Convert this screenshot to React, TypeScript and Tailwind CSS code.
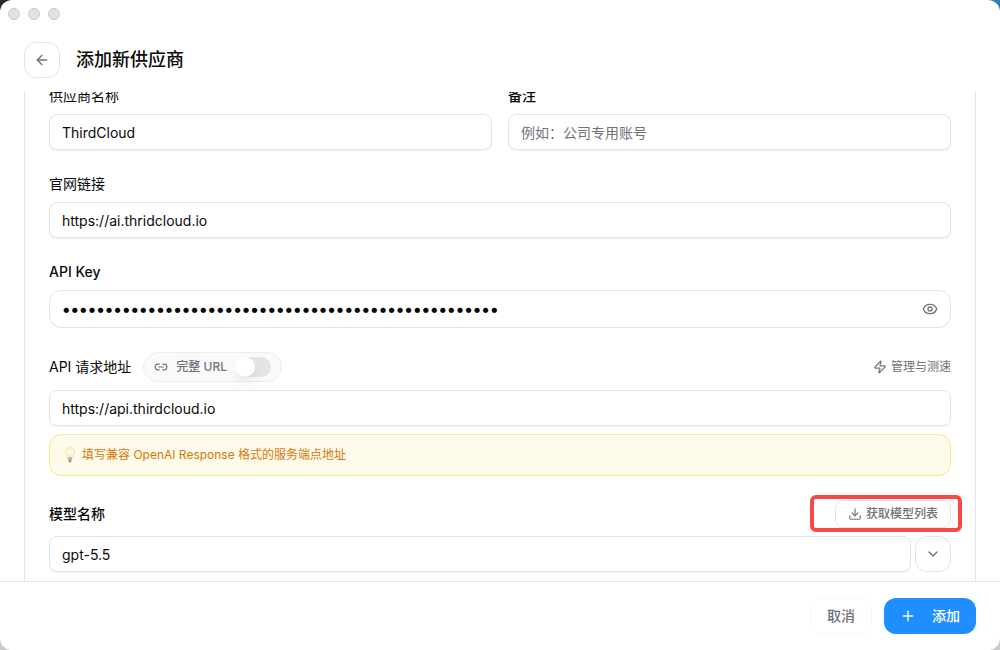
import { useState, type ReactNode } from "react";
import { ArrowLeft, ChevronDown, Download, Eye, Link2, Plus, Zap } from "lucide-react";

const inputClass =
  "block h-9 w-full min-w-0 rounded-lg border border-[#e4e4e7] bg-white px-3 text-sm text-[#09090b] shadow-xs outline-none placeholder:text-[#71717a]";

function Label({ htmlFor, children }: { htmlFor: string; children: ReactNode }) {
  return (
    <label htmlFor={htmlFor} className="block text-sm">
      {children}
    </label>
  );
}

function BulbIcon() {
  return (
    <svg width="16" height="16" viewBox="0 0 16 16" aria-hidden="true" className="shrink-0">
      <path
        d="M8 0.8a4.5 4.5 0 0 0-4.5 4.5c0 2.2 1.8 3.2 2.2 5.2h4.6c.4-2 2.2-3 2.2-5.2A4.5 4.5 0 0 0 8 0.8z"
        fill="#fffadf"
        stroke="#f3dfa0"
        strokeWidth="1"
      />
      <path d="M6.6 6 7.4 10.4M9.4 6 8.6 10.4" fill="none" stroke="#f6dc9a" strokeWidth="0.6" />
      <path d="M6 10.6h4v2.2L9.2 14.4H6.8L6 12.8z" fill="#a3a3a8" />
      <path d="M6 12h4" stroke="#d4d4d8" strokeWidth="0.6" />
      <path d="M6.8 14.2h2.4l-.6 1.2H7.4z" fill="#71717a" />
    </svg>
  );
}

export default function App() {
  const [fullUrl, setFullUrl] = useState(false);
  const [showKey, setShowKey] = useState(false);

  return (
    <div className="h-screen bg-[linear-gradient(to_right,#1c2b30_50%,#2f7db3_50%)] font-['Inter','Noto_Sans_CJK_SC',sans-serif] text-[#09090b]">
      <div className="h-full bg-[linear-gradient(to_bottom,transparent_50%,#c9c9c9_50%)]">
        <div className="flex h-full flex-col overflow-hidden rounded-xl bg-white">
          <div className="flex h-7 shrink-0 items-center gap-2 px-2">
            <span className="size-3 rounded-full border border-[#c9c9c9] bg-[#e2e2e2]" />
            <span className="size-3 rounded-full border border-[#c9c9c9] bg-[#e2e2e2]" />
            <span className="size-3 rounded-full border border-[#c9c9c9] bg-[#e2e2e2]" />
          </div>

          <header className="flex h-16 shrink-0 items-center gap-4 px-6">
            <button
              type="button"
              aria-label="返回"
              className="flex size-9 items-center justify-center rounded-xl border border-[#e4e4e7] text-[#71717a]"
            >
              <ArrowLeft size={16} />
            </button>
            <h1 className="text-lg font-medium">添加新供应商</h1>
          </header>

          <main className="flex min-h-0 flex-1 flex-col overflow-hidden px-6">
            <form className="-mt-1.5 flex flex-1 shrink-0 flex-col gap-6 border-x border-[#e4e4e7] px-6">
              <div className="grid grid-cols-2 gap-4">
                <div className="flex flex-col gap-2">
                  <Label htmlFor="name">供应商名称</Label>
                  <input id="name" className={inputClass} defaultValue="ThirdCloud" />
                </div>
                <div className="flex flex-col gap-2">
                  <Label htmlFor="note">
                    <span className="font-medium">备注</span>
                  </Label>
                  <input id="note" className={inputClass} placeholder="例如：公司专用账号" />
                </div>
              </div>

              <div className="flex flex-col gap-2">
                <Label htmlFor="site">官网链接</Label>
                <input id="site" className={inputClass} defaultValue="https://ai.thridcloud.io" />
              </div>

              <div className="flex flex-col gap-2">
                <Label htmlFor="key">
                  <span className="font-medium">API Key</span>
                </Label>
                <div className="flex h-[38px] items-center rounded-xl border border-[#e4e4e7] px-3">
                  <input
                    id="key"
                    type={showKey ? "text" : "password"}
                    className="h-full min-w-0 flex-1 bg-transparent text-[17px] font-semibold outline-none"
                    defaultValue={"k".repeat(51)}
                  />
                  <button
                    type="button"
                    aria-label="显示 API Key"
                    onClick={() => setShowKey(!showKey)}
                    className="text-[#71717a]"
                  >
                    <Eye size={16} />
                  </button>
                </div>
              </div>

              <div className="flex flex-col gap-2">
                <div className="flex items-center justify-between">
                  <div className="flex items-center gap-3">
                    <Label htmlFor="endpoint">API 请求地址</Label>
                    <label className="flex h-[30px] items-center gap-2 rounded-full border border-[#ececee] bg-[#fafafa] px-2.5 text-xs font-medium text-[#71717a]">
                      <Link2 size={14} />
                      完整 URL
                      <input
                        type="checkbox"
                        role="switch"
                        className="peer sr-only"
                        checked={fullUrl}
                        onChange={(e) => setFullUrl(e.target.checked)}
                      />
                      <span className="flex h-5 w-9 items-center rounded-full bg-[#e4e4e7] peer-checked:justify-end peer-checked:bg-[#1f8fff]">
                        <span className="size-5 rounded-full bg-white shadow-lg" />
                      </span>
                    </label>
                  </div>
                  <button type="button" className="flex items-center gap-1 text-xs text-[#71717a]">
                    <Zap size={14} />
                    管理与测速
                  </button>
                </div>
                <input id="endpoint" className={inputClass} defaultValue="https://api.thirdcloud.io" />
                <div className="flex items-center gap-1 rounded-xl border border-[#fde68a] bg-[#fffbeb] p-3 text-xs text-[#d97706]">
                  <BulbIcon />
                  <p>填写兼容 OpenAI Response 格式的服务端点地址</p>
                </div>
              </div>

              <div className="flex flex-col gap-2">
                <div className="flex items-center justify-between">
                  <Label htmlFor="model">
                    <span className="font-medium">模型名称</span>
                  </Label>
                  <div className="relative">
                    <button
                      type="button"
                      className="flex h-7 items-center gap-1 rounded-lg border border-[#e4e4e7] px-3 text-xs font-medium text-[#71717a]"
                    >
                      <Download size={14} />
                      获取模型列表
                    </button>
                    <div className="pointer-events-none absolute -top-[5px] -right-[11px] -bottom-1 -left-[25px] rounded-md border-4 border-[#f54a45]" />
                  </div>
                </div>
                <div className="flex gap-1">
                  <input id="model" className={inputClass} defaultValue="gpt-5.5" />
                  <button
                    type="button"
                    aria-label="选择模型"
                    className="flex size-9 shrink-0 items-center justify-center rounded-xl border border-[#e4e4e7] text-[#71717a]"
                  >
                    <ChevronDown size={16} />
                  </button>
                </div>
              </div>
            </form>
          </main>

          <footer className="flex shrink-0 justify-end gap-3 border-t border-[#e4e4e7] px-6 py-4 text-sm font-medium">
            <button type="button" className="h-9 rounded-xl border border-[#f7f7f8] px-4 text-[#71717a]">
              取消
            </button>
            <button type="button" className="flex h-9 items-center gap-4 rounded-xl bg-[#1f8fff] px-4 text-white">
              <Plus size={16} />
              添加
            </button>
          </footer>
        </div>
      </div>
    </div>
  );
}
